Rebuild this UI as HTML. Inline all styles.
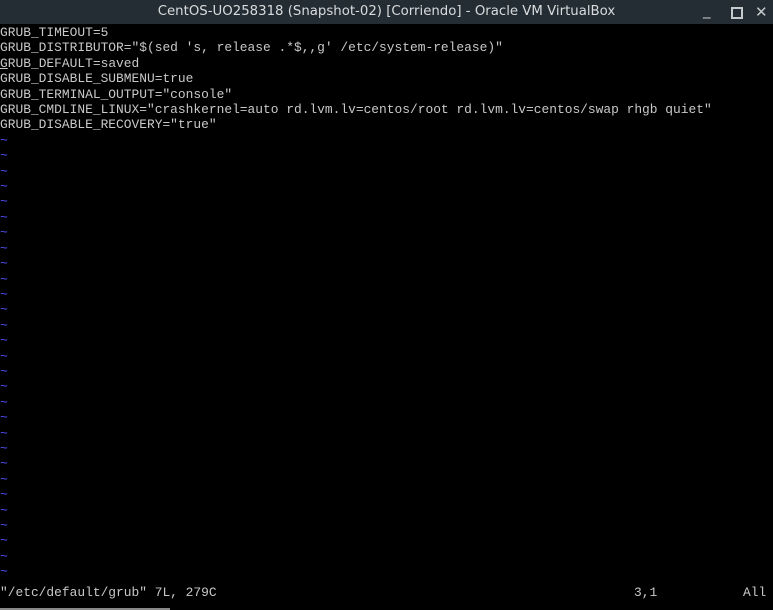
<!DOCTYPE html>
<html><head><style>
html,body{margin:0;padding:0;background:#000;width:773px;height:610px;overflow:hidden;position:relative}
.tb{position:absolute;left:0;top:0;width:773px;height:24px;background:#232d33;color:#d9dcde;font:13.3px "DejaVu Sans","Liberation Sans",sans-serif;text-align:center;line-height:24px}
.btn{position:absolute;top:0;color:#c5cacd;font:15px "DejaVu Sans",sans-serif;line-height:24px}
pre{position:absolute;left:0;top:25px;margin:0;font:12.9px/15.4px "Liberation Mono",monospace;color:#c8c8c8}
.t{color:#5050ff}
.st{position:absolute;top:585px;font:12.9px/15px "Liberation Mono",monospace;color:#c8c8c8;white-space:pre}
.bar{position:absolute;left:0;top:608px;width:170px;height:2px;background:#888}
</style></head><body>
<div class="tb">CentOS-UO258318 (Snapshot-02) [Corriendo] - Oracle VM VirtualBox</div>
<div class="btn" style="left:703px;top:-2px">_</div>
<div style="position:absolute;left:731px;top:7px;width:8px;height:8px;border:2px solid #c5cacd"></div>
<div class="btn" style="left:755px">✕</div>
<pre>GRUB_TIMEOUT=5
GRUB_DISTRIBUTOR="$(sed 's, release .*$,,g' /etc/system-release)"
<u>G</u>RUB_DEFAULT=saved
GRUB_DISABLE_SUBMENU=true
GRUB_TERMINAL_OUTPUT="console"
GRUB_CMDLINE_LINUX="crashkernel=auto rd.lvm.lv=centos/root rd.lvm.lv=centos/swap rhgb quiet"
GRUB_DISABLE_RECOVERY="true"
<span class="t">~
~
~
~
~
~
~
~
~
~
~
~
~
~
~
~
~
~
~
~
~
~
~
~
~
~
~
~
~</span></pre>
<div class="st" style="left:0">"/etc/default/grub" 7L, 279C</div>
<div class="st" style="left:634px">3,1</div>
<div class="st" style="left:743px">All</div>
<div class="bar"></div>
</body></html>
